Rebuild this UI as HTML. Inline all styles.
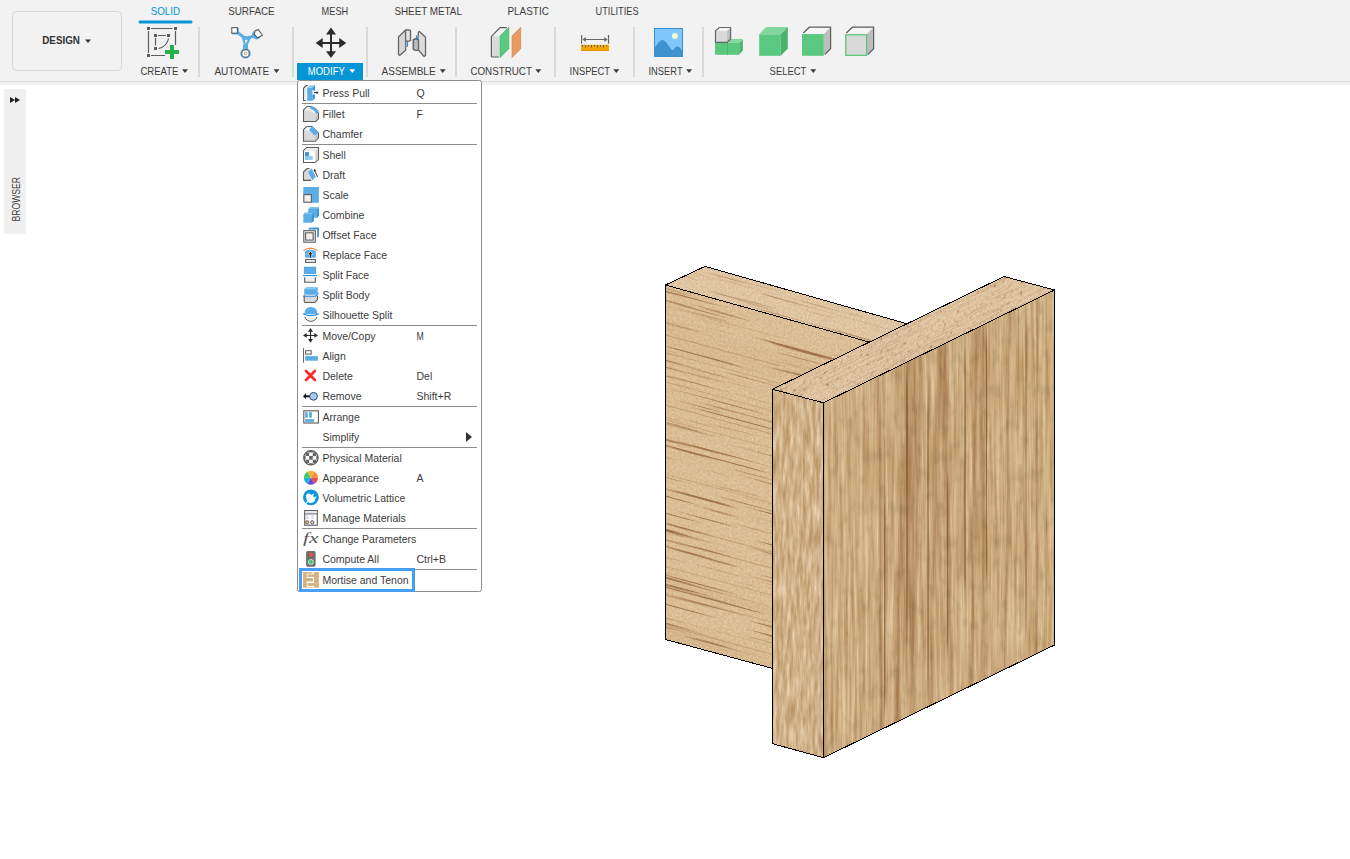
<!DOCTYPE html>
<html><head><meta charset="utf-8">
<style>
html,body{margin:0;padding:0;background:#fff;width:1350px;height:859px;overflow:hidden}
svg{display:block}
text{font-family:"Liberation Sans",sans-serif}
.tb{font-size:10.5px;fill:#3c3c3c}
.tab{font-size:11px;fill:#3c3c3c}
.mi{font-size:10.5px;fill:#3c3c3c}
</style></head>
<body>
<svg width="1350" height="859" viewBox="0 0 1350 859">
<!-- toolbar -->
<rect x="0" y="0" width="1350" height="85" fill="#f2f2f2"/>
<rect x="0" y="81" width="1350" height="1" fill="#dcdcdc"/>
<rect x="12.5" y="11.5" width="109" height="59" rx="4" fill="#f2f2f2" stroke="#d6d6d6"/>
<text x="42.2" y="44" font-size="11" font-weight="bold" fill="#333" textLength="37.8" lengthAdjust="spacingAndGlyphs">DESIGN</text>
<path d="M85 39.5h6l-3 3.5z" fill="#333"/>
<!-- tabs -->
<g class="tab">
<text x="150.7" y="15" fill="#0696d7" textLength="29.3" lengthAdjust="spacingAndGlyphs">SOLID</text>
<text x="228.2" y="15" textLength="46.5" lengthAdjust="spacingAndGlyphs">SURFACE</text>
<text x="321.6" y="15" textLength="26.6" lengthAdjust="spacingAndGlyphs">MESH</text>
<text x="394.4" y="15" textLength="67.5" lengthAdjust="spacingAndGlyphs">SHEET METAL</text>
<text x="507.4" y="15" textLength="41.5" lengthAdjust="spacingAndGlyphs">PLASTIC</text>
<text x="595.6" y="15" textLength="43" lengthAdjust="spacingAndGlyphs">UTILITIES</text>
</g>
<rect x="138.5" y="20.5" width="54" height="3" rx="1.5" fill="#0696d7"/>
<!-- separators -->
<g fill="#d9d9d9">
<rect x="198" y="27" width="2" height="50"/>
<rect x="292" y="27" width="2" height="50"/>
<rect x="366" y="27" width="2" height="50"/>
<rect x="455" y="27" width="2" height="50"/>
<rect x="554" y="27" width="2" height="50"/>
<rect x="633" y="27" width="2" height="50"/>
<rect x="702" y="27" width="2" height="50"/>
</g>
<!-- modify bg -->
<rect x="297" y="63" width="66" height="17" fill="#0696d7"/>
<!-- labels -->
<g class="tb">
<text x="140.4" y="75" textLength="38.1" lengthAdjust="spacingAndGlyphs">CREATE</text>
<text x="214.4" y="75" textLength="54.9" lengthAdjust="spacingAndGlyphs">AUTOMATE</text>
<text x="307.8" y="75" fill="#fff" textLength="37" lengthAdjust="spacingAndGlyphs">MODIFY</text>
<text x="381.5" y="75" textLength="54.1" lengthAdjust="spacingAndGlyphs">ASSEMBLE</text>
<text x="470.4" y="75" textLength="61.5" lengthAdjust="spacingAndGlyphs">CONSTRUCT</text>
<text x="569.6" y="75" textLength="40.4" lengthAdjust="spacingAndGlyphs">INSPECT</text>
<text x="648.5" y="75" textLength="34.1" lengthAdjust="spacingAndGlyphs">INSERT</text>
<text x="769.6" y="75" textLength="36.8" lengthAdjust="spacingAndGlyphs">SELECT</text>
</g>
<g fill="#3c3c3c">
<path d="M182 69.3h6l-3 3.6z"/>
<path d="M273.5 69.3h6l-3 3.6z"/>
<path d="M349.3 69.3h6l-3 3.6z" fill="#fff"/>
<path d="M439.7 69.3h6l-3 3.6z"/>
<path d="M535.3 69.3h6l-3 3.6z"/>
<path d="M613.3 69.3h6l-3 3.6z"/>
<path d="M686.1 69.3h6l-3 3.6z"/>
<path d="M810.3 69.3h6l-3 3.6z"/>
</g>
<!-- ICONS placeholder -->
<g id="icons">
<!-- create -->
<g fill="#5c5c5c">
<rect x="147" y="27" width="3" height="3"/><rect x="174" y="27" width="3" height="3"/><rect x="147" y="54" width="3" height="3"/>
<rect x="154" y="34" width="3" height="3"/><rect x="167" y="34" width="3" height="3"/><rect x="154" y="47" width="3" height="3"/>
</g>
<g stroke="#5c5c5c" stroke-width="1.2" fill="none">
<path d="M151 28.5h21.5M148.5 31v22M175.5 31v14M151 55.5h14M158 35.5h8M155.5 38v7.5M168.5 38.5Q167 46.5 158.5 48.5"/>
</g>
<path d="M170 45h4v5h5v4h-5v5h-4v-5h-5v-4h5z" fill="#24b04b"/>
<!-- automate -->
<g fill="#5aaee8">
<rect x="232.5" y="28.3" width="6.4" height="6.2"/>
<circle cx="256.6" cy="34.8" r="4.6"/>
<circle cx="245.5" cy="53.4" r="5.2"/>
<rect x="243" y="45" width="5" height="6"/>
</g>
<g fill="none" stroke="#5aaee8" stroke-linejoin="round">
<path d="M236.5 31.8Q241 35 243.8 37.3Q248 38.5 254 35.8" stroke-width="3"/>
<path d="M243.2 38.4L249.3 38.9L245.6 47.3Z" stroke-width="2.2"/>
</g>
<circle cx="245.5" cy="53.4" r="3.8" fill="#fff" stroke="#666" stroke-width="1.2"/>
<circle cx="245.5" cy="53.4" r="1.4" fill="none" stroke="#888" stroke-width="0.7"/>
<rect x="231.8" y="27.6" width="5.6" height="5.6" fill="#fff" stroke="#5c5c5c" stroke-width="1.1"/>
<path d="M258.3 29.5L262.4 35.3L257.6 37.8L254.3 34.5L255 30.9Z" fill="#fff" stroke="#5c5c5c" stroke-width="1.1"/>
<!-- move -->
<g fill="#2b2b2b">
<path d="M331 27.6L336 34.6H326zM331 58.1L336 51.3H326zM315.6 43L322.7 38V48zM346.3 43L339.2 38V48z"/>
<rect x="330" y="34" width="2" height="18"/><rect x="322" y="42" width="18" height="2"/>
</g>
<!-- assemble -->
<g stroke="#666" stroke-width="1.3" stroke-linejoin="round">
<path d="M398.5 37L405.5 30L410.5 30.5V40.5L405.7 41.3V50.2L399.7 55.5L398.5 54.6Z" fill="#d6d6d6"/>
<path d="M405.5 30.3Q408 29.5 410.4 30.5V40.5Q408 41.5 405.7 41.1Z" fill="#e4e4e4"/>
<path d="M419.5 31.5L425.5 37.2V55.5L424.1 56.5L418.8 50.4L414.4 49.9L413.4 49V39.5L418 38.1L418.5 32Z" fill="#dcdcdc"/>
<path d="M413.4 39.5Q416 38.5 418.5 39.6V50.2Q416 50.8 413.4 49.4Z" fill="#bdbdbd"/>
</g>
<path d="M407.4 42v4.8M416.4 35.2v5" stroke="#1e8be6" stroke-width="1.1"/>
<!-- construct -->
<rect x="492.2" y="36.2" width="6.8" height="20.8" fill="#d9d9d9"/>
<path d="M491.4 57V36.4L500 27.6H506.7M491.4 57H498.8" fill="none" stroke="#5c5c5c" stroke-width="1.2"/>
<path d="M500 36L508.8 27.3V48.8L500 57.5Z" fill="#5bc87f" stroke="#48b96c" stroke-width="0.8"/>
<path d="M512.1 36L520.7 27.3V48.8L512.1 57.5Z" fill="#e89b63" stroke="#da8a4f" stroke-width="0.8"/>
<!-- inspect -->
<rect x="581" y="44.8" width="28" height="6" fill="#f7a800"/>
<rect x="581" y="49.9" width="28" height="1" fill="#e39400"/>
<g fill="#666">
<rect x="581" y="35" width="1.2" height="8.7"/><rect x="607.9" y="35" width="1.2" height="8.7"/>
<rect x="583" y="39" width="24" height="1"/>
<path d="M582.5 39.5L585.8 37.1V41.9zM607.6 39.5L604.3 37.1V41.9z"/>
<rect x="582" y="45" width="1" height="1.7"/><rect x="585" y="45" width="1" height="2.8"/><rect x="588" y="45" width="1" height="1.7"/>
<rect x="591" y="45" width="1" height="2.8"/><rect x="594" y="45" width="1" height="1.7"/><rect x="597" y="45" width="1" height="2.8"/>
<rect x="600" y="45" width="1" height="1.7"/><rect x="603" y="45" width="1" height="2.8"/><rect x="606" y="45" width="1" height="1.7"/>
</g>
<!-- insert -->
<rect x="654.5" y="28.5" width="28" height="28" fill="#80c8fc" stroke="#3a8fd0"/>
<path d="M655 47.5Q659 40 662.4 39.9Q665 40 669 46Q671.5 50.5 673 50.2Q675 46.5 677.3 46.2Q680 46.5 682 50.9V56H655Z" fill="#3f93cd"/>
<circle cx="674.9" cy="36" r="3" fill="#fdfcc8" stroke="#a6d6f0" stroke-width="0.4"/>
<!-- select 1 -->
<path d="M715 42.5h24.3v12.3H715z" fill="#5bc87f"/>
<path d="M727.2 42.5L730.7 39H742.8L739.3 42.8z" fill="#80d89e"/>
<path d="M739.3 42.8L742.8 39.2V50.4L739.3 54.6z" fill="#49b36a"/>
<rect x="727.2" y="42.5" width="0.6" height="12.3" fill="#4aa969"/>
<path d="M715.5 31.1L719.3 27.5H730.6V39L727.2 42.4H715.5z" fill="#d9d9d9"/>
<path d="M715.5 31.1L719.3 27.5H730.6L727.2 31.1z" fill="#f4f4f4"/>
<path d="M727.2 31.1L730.6 27.5V39L727.2 42.4z" fill="#bdbdbd"/>
<path d="M715.5 42.4V31.1L719.3 27.5H730.6V39L727.2 42.4z" fill="none" stroke="#666" stroke-width="1.2"/>
<!-- select 2 -->
<path d="M759.2 34.3h21.6v21.5h-21.6z" fill="#5bc87f"/>
<path d="M759.2 34.3L766.2 27.1H787.8L780.8 34.3z" fill="#80d89e"/>
<path d="M780.8 34.3L787.8 27.1V48.5L780.8 55.8z" fill="#49b36a"/>
<!-- select 3 -->
<path d="M803.3 33L809.3 27.2H830.6L824.5 33z" fill="#f6f6f6"/>
<path d="M824 34L830.6 27.2V48.7L824 55z" fill="#bdbdbd"/>
<path d="M803.3 33L809.3 27.2H830.6V48.7L825 54.3" fill="none" stroke="#5c5c5c" stroke-width="1.2"/>
<rect x="802" y="34.1" width="21.8" height="21.7" fill="#5bc87f"/>
<!-- select 4 -->
<path d="M846.3 33L852.3 27.2H873.6L867.5 33z" fill="#f6f6f6"/>
<path d="M867 34L873.6 27.2V48.7L867 55z" fill="#bdbdbd"/>
<path d="M846.3 33L852.3 27.2H873.6V48.7L868 54.3" fill="none" stroke="#5c5c5c" stroke-width="1.2"/>
<rect x="845.8" y="34.8" width="20.8" height="20.5" fill="#d9d9d9" stroke="#5bc87f" stroke-width="1.3"/>
</g>

<!-- browser -->
<rect x="4" y="89" width="22" height="145" fill="#f0f0f0"/>
<path d="M10 97v6l5-3zM15 97v6l5-3z" fill="#222"/>
<text transform="translate(19.5,221.5) rotate(-90)" font-size="10" fill="#3c3c3c" textLength="44.6" lengthAdjust="spacingAndGlyphs">BROWSER</text>

<!-- WOOD placeholder -->
<g id="wood">
<defs>
<clipPath id="cA"><polygon points="705,266.4 907,323.8 869,342 665.5,285"/></clipPath>
<clipPath id="cB"><polygon points="665.5,285 869,342 772.5,389.3 772.5,668.4 665.5,639.5"/></clipPath>
<clipPath id="cC"><polygon points="1004,276.5 1054.5,290 823.5,402.8 772.5,389.3"/></clipPath>
<clipPath id="cD"><polygon points="772.5,389.3 823.5,402.8 823.5,757.7 772.5,743.7"/></clipPath>
<clipPath id="cE"><polygon points="823.5,402.8 1054.5,290 1054.5,645 823.5,757.7"/></clipPath>
<filter id="fE" x="0" y="0" width="1" height="1" color-interpolation-filters="sRGB">
  <feTurbulence type="fractalNoise" baseFrequency="0.35 0.012" numOctaves="3" seed="7"/>
  <feColorMatrix type="matrix" values="0.26 0 0 0 0.6740  0.32 0 0 0 0.5186  0.38 0 0 0 0.3134  0 0 0 0 1" result="base"/>
  <feTurbulence type="fractalNoise" baseFrequency="0.04 0.001" numOctaves="1" seed="3"/>
  <feColorMatrix type="matrix" values="1.0 0 0 0 0.0  1.0 0 0 0 0.0  1.0 0 0 0 0.0  0 0 0 0 1"/><feComponentTransfer><feFuncR type="table" tableValues="1 1 1 1 1 1 1 1 1 1 1 1 0.88 1 1 1 1 1 1 1 1 1 1 1 1"/><feFuncG type="table" tableValues="1 1 1 1 1 1 1 1 1 1 1 1 0.82 1 1 1 1 1 1 1 1 1 1 1 1"/><feFuncB type="table" tableValues="1 1 1 1 1 1 1 1 1 1 1 1 0.76 1 1 1 1 1 1 1 1 1 1 1 1"/><feFuncA type="linear" slope="0" intercept="1"/></feComponentTransfer>
  <feBlend mode="multiply" in="base" result="b2"/>
  <feTurbulence type="fractalNoise" baseFrequency="0.12 0.06" numOctaves="2" seed="17"/>
  <feColorMatrix type="matrix" values="0.25 0 0 0 0.875  0.28 0 0 0 0.86  0.3 0 0 0 0.85  0 0 0 0 1"/>
  <feBlend mode="multiply" in="b2"/>
</filter>
<filter id="fD" x="0" y="0" width="1" height="1" color-interpolation-filters="sRGB">
  <feTurbulence type="fractalNoise" baseFrequency="0.3 0.04" numOctaves="3" seed="11"/>
  <feColorMatrix type="matrix" values="0.3 0 0 0 0.6656  0.38 0 0 0 0.5039  0.46 0 0 0 0.3031  0 0 0 0 1" result="base"/>
  <feTurbulence type="fractalNoise" baseFrequency="0.45 0.07" numOctaves="1" seed="19"/>
  <feColorMatrix type="matrix" values="1.0 0 0 0 0.0  1.0 0 0 0 0.0  1.0 0 0 0 0.0  0 0 0 0 1"/><feComponentTransfer><feFuncR type="table" tableValues="0.72 0.78 0.86 0.94 1 1 1 1 1 1 1 1 1 1 1 1"/><feFuncG type="table" tableValues="0.62 0.7 0.8 0.92 1 1 1 1 1 1 1 1 1 1 1 1"/><feFuncB type="table" tableValues="0.52 0.6 0.74 0.9 1 1 1 1 1 1 1 1 1 1 1 1"/><feFuncA type="linear" slope="0" intercept="1"/></feComponentTransfer>
  <feBlend mode="multiply" in="base"/>
</filter>
<filter id="fB" x="0" y="0" width="1" height="1" color-interpolation-filters="sRGB">
  <feTurbulence type="fractalNoise" baseFrequency="0.5 0.5" numOctaves="2" seed="5"/>
  <feColorMatrix type="matrix" values="0.15 0 0 0 0.7847  0.2 0 0 0 0.6441  0.26 0 0 0 0.4545  0 0 0 0 1" result="base"/>
  <feTurbulence type="fractalNoise" baseFrequency="0.008 0.45" numOctaves="2" seed="9"/>
  <feColorMatrix type="matrix" values="2.0 0 0 0 -0.5  2.0 0 0 0 -0.5  2.0 0 0 0 -0.5  0 0 0 0 1"/><feComponentTransfer><feFuncR type="table" tableValues="0.72 0.8 0.88 0.95 1 1 1 1 1 1 1 1 1 1 1 1"/><feFuncG type="table" tableValues="0.6 0.7 0.82 0.93 1 1 1 1 1 1 1 1 1 1 1 1"/><feFuncB type="table" tableValues="0.5 0.62 0.76 0.9 1 1 1 1 1 1 1 1 1 1 1 1"/><feFuncA type="linear" slope="0" intercept="1"/></feComponentTransfer>
  <feBlend mode="multiply" in="base" result="b2"/>
  <feTurbulence type="fractalNoise" baseFrequency="0.002 0.03" numOctaves="2" seed="21"/>
  <feColorMatrix type="matrix" values="0.1 0 0 0 0.95  0.16 0 0 0 0.92  0.22 0 0 0 0.89  0 0 0 0 1"/>
  <feBlend mode="multiply" in="b2"/>
</filter>
<filter id="fA" x="0" y="0" width="1" height="1" color-interpolation-filters="sRGB">
  <feTurbulence type="fractalNoise" baseFrequency="0.6 0.6" numOctaves="2" seed="2"/>
  <feColorMatrix type="matrix" values="0.2 0 0 0 0.7731  0.22 0 0 0 0.6645  0.25 0 0 0 0.5099  0 0 0 0 1" result="base"/>
  <feTurbulence type="fractalNoise" baseFrequency="0.01 0.5" numOctaves="2" seed="4"/>
  <feColorMatrix type="matrix" values="1.8 0 0 0 -0.4  1.8 0 0 0 -0.4  1.8 0 0 0 -0.4  0 0 0 0 1"/><feComponentTransfer><feFuncR type="table" tableValues="0.8 0.86 0.92 0.97 1 1 1 1 1 1 1 1 1 1 1 1"/><feFuncG type="table" tableValues="0.7 0.8 0.88 0.95 1 1 1 1 1 1 1 1 1 1 1 1"/><feFuncB type="table" tableValues="0.6 0.72 0.84 0.93 1 1 1 1 1 1 1 1 1 1 1 1"/><feFuncA type="linear" slope="0" intercept="1"/></feComponentTransfer>
  <feBlend mode="multiply" in="base"/>
</filter>
<filter id="fC" x="0" y="0" width="1" height="1" color-interpolation-filters="sRGB">
  <feTurbulence type="fractalNoise" baseFrequency="0.6 0.6" numOctaves="2" seed="12"/>
  <feColorMatrix type="matrix" values="0.2 0 0 0 0.7747  0.22 0 0 0 0.6612  0.25 0 0 0 0.5109  0 0 0 0 1" result="base"/>
  <feTurbulence type="fractalNoise" baseFrequency="0.3 0.3" numOctaves="1" seed="14"/>
  <feColorMatrix type="matrix" values="1.0 0 0 0 0.0  1.0 0 0 0 0.0  1.0 0 0 0 0.0  0 0 0 0 1"/><feComponentTransfer><feFuncR type="table" tableValues="0.7 0.7 0.72 0.78 0.88 0.96 1 1 1 1 1 1 1 1 1 1"/><feFuncG type="table" tableValues="0.58 0.58 0.6 0.68 0.82 0.94 1 1 1 1 1 1 1 1 1 1"/><feFuncB type="table" tableValues="0.48 0.48 0.5 0.6 0.76 0.92 1 1 1 1 1 1 1 1 1 1"/><feFuncA type="linear" slope="0" intercept="1"/></feComponentTransfer>
  <feBlend mode="multiply" in="base" result="b2"/>
  <feTurbulence type="fractalNoise" baseFrequency="0.01 0.35" numOctaves="1" seed="31"/>
  <feColorMatrix type="matrix" values="1.0 0 0 0 0.0  1.0 0 0 0 0.0  1.0 0 0 0 0.0  0 0 0 0 1"/><feComponentTransfer><feFuncR type="table" tableValues="1 1 1 1 1 1 1 1 1 1 0.92 1 1 1 1 1 1 1 1 1 1"/><feFuncG type="table" tableValues="1 1 1 1 1 1 1 1 1 1 0.88 1 1 1 1 1 1 1 1 1 1"/><feFuncB type="table" tableValues="1 1 1 1 1 1 1 1 1 1 0.84 1 1 1 1 1 1 1 1 1 1"/><feFuncA type="linear" slope="0" intercept="1"/></feComponentTransfer>
  <feBlend mode="multiply" in="b2"/>
</filter>
<linearGradient id="fadeV" x1="0" y1="0" x2="0" y2="1"><stop offset="0" stop-color="#6e4420" stop-opacity="0"/><stop offset="0.12" stop-color="#6e4420"/><stop offset="0.88" stop-color="#6e4420"/><stop offset="1" stop-color="#6e4420" stop-opacity="0"/></linearGradient>
<filter id="blur1"><feGaussianBlur stdDeviation="0.45"/></filter><filter id="blur05"><feGaussianBlur stdDeviation="0.35"/></filter>
</defs>
<g clip-path="url(#cE)"><rect x="815" y="280" width="250" height="490" filter="url(#fE)"/>
<g><rect x="884.25" y="430" width="1.1" height="100" fill="url(#fadeV)" opacity="0.44999999999999996"/><rect x="884.25" y="500" width="1.1" height="220" fill="url(#fadeV)" opacity="0.8250000000000001"/><rect x="906.45" y="355" width="1.1" height="295" fill="url(#fadeV)" opacity="0.8999999999999999"/><rect x="927.45" y="380" width="1.1" height="330" fill="url(#fadeV)" opacity="0.75"/><rect x="947.1500000000001" y="470" width="1.1" height="190" fill="url(#fadeV)" opacity="0.6000000000000001"/><rect x="964.45" y="330" width="1.1" height="280" fill="url(#fadeV)" opacity="0.8250000000000001"/><rect x="985.95" y="320" width="1.1" height="270" fill="url(#fadeV)" opacity="0.6000000000000001"/><rect x="1025.45" y="300" width="1.1" height="350" fill="url(#fadeV)" opacity="0.5249999999999999"/></g></g>
<g clip-path="url(#cD)"><rect x="765" y="380" width="65" height="385" filter="url(#fD)"/></g>
<g clip-path="url(#cB)"><g transform="matrix(1,0.27,0,1,0,0)"><rect x="650" y="0" width="240" height="520" filter="url(#fB)"/></g>
<g fill="none" stroke="#95612c" filter="url(#blur05)"><path d="M660 305 L780 337.4" stroke-opacity="0.144" stroke-width="1"/><path d="M660 333.5 L780 365.9" stroke-opacity="0.36" stroke-width="1"/><path d="M660 351 L780 383.4" stroke-opacity="0.252" stroke-width="1"/><path d="M660 380.6 L780 413.0" stroke-opacity="0.252" stroke-width="1"/><path d="M660 403.7 L780 436.1" stroke-opacity="0.36" stroke-width="1"/><path d="M660 418 L780 450.4" stroke-opacity="0.252" stroke-width="1"/><path d="M660 437 L780 469.4" stroke-opacity="0.144" stroke-width="1"/><path d="M660 472.8 L780 505.2" stroke-opacity="0.252" stroke-width="1"/><path d="M660 522 L780 554.4" stroke-opacity="0.36" stroke-width="1"/><path d="M660 538 L780 570.4" stroke-opacity="0.36" stroke-width="1"/><path d="M660 565 L780 597.4" stroke-opacity="0.252" stroke-width="1"/><path d="M660 592 L780 624.4" stroke-opacity="0.252" stroke-width="1"/><path d="M660 616 L780 648.4" stroke-opacity="0.144" stroke-width="1"/><path d="M660 624 L780 656.4" stroke-opacity="0.324" stroke-width="1"/></g></g>
<g clip-path="url(#cA)"><g transform="matrix(1,0.28,0,1,0,0)"><rect x="650" y="60" width="270" height="100" filter="url(#fA)"/></g></g>
<g clip-path="url(#cC)"><g transform="matrix(1,-0.4875,0,1,0,0)"><rect x="760" y="760" width="300" height="100" filter="url(#fC)"/></g></g>
<g fill="none" stroke="#000" stroke-width="1" shape-rendering="crispEdges">
<polyline points="665.5,639.5 665.5,285 705,266.4 907,323.8"/>
<line x1="665.5" y1="285" x2="869" y2="342"/>
<polyline points="772.5,668.4 665.5,639.5"/>
<polygon points="1004,276.5 1054.5,290 1054.5,645 823.5,757.7 772.5,743.7 772.5,389.3"/>
<polyline points="772.5,389.3 823.5,402.8 1054.5,290"/>
<line x1="823.5" y1="402.8" x2="823.5" y2="757.7"/>
</g>
</g>

<!-- MENU -->
<rect x="297.5" y="80.5" width="184" height="511" rx="2" fill="#fff" stroke="#8c8c8c"/>
<g fill="#8c8c8c">
<rect x="302" y="103" width="175" height="1"/>
<rect x="302" y="144" width="175" height="1"/>
<rect x="302" y="325" width="175" height="1"/>
<rect x="302" y="406" width="175" height="1"/>
<rect x="302" y="447" width="175" height="1"/>
<rect x="302" y="528" width="175" height="1"/>
<rect x="302" y="569" width="175" height="1"/>
</g>
<g class="mi">
<text x="322.4" y="97">Press Pull</text><text x="416.5" y="97">Q</text>
<text x="322.4" y="118">Fillet</text><text x="416.5" y="118">F</text>
<text x="322.4" y="138">Chamfer</text>
<text x="322.4" y="159">Shell</text>
<text x="322.4" y="179">Draft</text>
<text x="322.4" y="199">Scale</text>
<text x="322.4" y="219">Combine</text>
<text x="322.4" y="239">Offset Face</text>
<text x="322.4" y="259">Replace Face</text>
<text x="322.4" y="279">Split Face</text>
<text x="322.4" y="299">Split Body</text>
<text x="322.4" y="319">Silhouette Split</text>
<text x="322.4" y="340">Move/Copy</text><text x="416.5" y="340" textLength="7.2" lengthAdjust="spacingAndGlyphs">M</text>
<text x="322.4" y="360">Align</text>
<text x="322.4" y="380">Delete</text><text x="416.5" y="380">Del</text>
<text x="322.4" y="400">Remove</text><text x="416.5" y="400">Shift+R</text>
<text x="322.4" y="421">Arrange</text>
<text x="322.4" y="441">Simplify</text>
<text x="322.4" y="462">Physical Material</text>
<text x="322.4" y="482">Appearance</text><text x="416.5" y="482">A</text>
<text x="322.4" y="502">Volumetric Lattice</text>
<text x="322.4" y="522">Manage Materials</text>
<text x="322.4" y="543">Change Parameters</text>
<text x="322.4" y="563">Compute All</text><text x="416.5" y="563">Ctrl+B</text>
<text x="322.4" y="584">Mortise and Tenon</text>
</g>
<path d="M466 432v10l6-5z" fill="#333"/>
<rect x="300.5" y="569.5" width="113" height="21" fill="none" stroke="#45a0f5" stroke-width="3"/>
<g id="micons">
<g transform="translate(303,85)"><path d="M2.8 15.5H0.5V3.3L3.2 0.5H4.8" fill="#ececec" stroke="#5a5a5a" stroke-width="1.1"/>
<path d="M4.2 2.8L6.6 0.3H12L9.4 2.8z" fill="#8ccdf7"/>
<rect x="4.2" y="2.8" width="5.2" height="13" fill="#5aaee8"/>
<path d="M9.4 2.8L12 0.3V5.6H9.4V9.4H12V13.2L9.4 15.8z" fill="#3b92d4"/>
<path d="M11 7.6H14.5" stroke="#222" stroke-width="1"/><path d="M15.4 7.6L13.6 6V9.2z" fill="#222"/></g>
<g transform="translate(303,106)"><path d="M0.5 15.5V4L4 0.5H7.3Q13.5 1.5 15.5 7V12.8L12.6 15.5z" fill="#d9d9d9" stroke="#5a5a5a" stroke-width="1.1"/>
<path d="M1.2 4.3L4.2 1.3H7.2Q11 2 13 5L11 7Q8 4.5 5 4.5z" fill="#f7f7f7"/>
<path d="M7.4 1.6Q12.6 2.6 14.7 7.4" fill="none" stroke="#5aaee8" stroke-width="2.6"/>
<path d="M12.8 14.8L15 12.6V9L12.8 10.5z" fill="#bdbdbd"/></g>
<g transform="translate(303,126)"><path d="M0.5 15.3V3.8L3.8 0.5H8.8L15.5 7V11.8L12.3 15.3z" fill="#d9d9d9" stroke="#5a5a5a" stroke-width="1.1"/>
<path d="M1.2 4L4 1.2H7L11.5 7.5Q6 4.5 1.2 4z" fill="#f5f5f5"/>
<path d="M9.1 0.5L15.6 6.6L12 9.8L5.9 3.9z" fill="#5aaee8"/>
<path d="M12.3 14.6L15 11.8V8L12.3 10.5z" fill="#c2c2c2"/></g>
<g transform="translate(303,147)"><path d="M0.5 15.5V3.6L3.6 0.5H15.5V12.3L12.3 15.5z" fill="#fff" stroke="#5a5a5a" stroke-width="1.1"/>
<path d="M1.2 3.6L3.8 1.2H14.8L12.3 3.6z" fill="#ececec"/><path d="M12.3 3.6L14.8 1.2V12L12.3 14.8z" fill="#d0d0d0"/>
<path d="M0.5 3.6H12.3V15.5" fill="none" stroke="#ddd" stroke-width="0.6"/>
<rect x="2.1" y="5.1" width="3.8" height="7.7" fill="#3b92d4"/><rect x="2.1" y="9.1" width="7.7" height="3.7" fill="#8ccdf7"/></g>
<g transform="translate(303,167)"><path d="M8.2 13.4H0.5V5L4 1.5H6.5" fill="#d9d9d9" stroke="#5a5a5a" stroke-width="1.1"/>
<path d="M8.6 1.3L12.8 9.6L9.3 13.6L5.2 5z" fill="#5aaee8"/>
<path d="M14.5 9.9L11.8 3.6" stroke="#222" stroke-width="0.9"/><path d="M11.1 1.8L13.2 3.6L10.8 4.5z" fill="#222"/></g>
<g transform="translate(303,187)"><path d="M0.3 0.1H15.9V15.7H8.9V7.1H0.3z" fill="#5aaee8"/>
<rect x="0.8" y="7.6" width="7.6" height="7.6" fill="#f0f0f0" stroke="#5a5a5a" stroke-width="1.1"/></g>
<g transform="translate(303,207)"><path d="M5.2 2L7 0.2H15.9V8.8L14 10.8H5.2z" fill="#5aaee8"/><path d="M14 2H15.9V8.8L14 10.8z" fill="#3b92d4"/>
<path d="M0.3 7.3L2 5.5H10.7V13.8L8.8 15.7H0.3z" fill="#5aaee8"/><path d="M8.8 7.3H10.7V13.8L8.8 15.7z" fill="#3b92d4"/>
<path d="M1.5 6.6H9" stroke="#8ccdf7" stroke-width="0.8"/><path d="M6.5 1.2H15" stroke="#8ccdf7" stroke-width="0.8"/></g>
<g transform="translate(303,227)"><path d="M5.6 0.8L15.9 0.4V9.7L14.2 10.6V2.5H5.6z" fill="#3b92d4"/>
<rect x="0.8" y="3.7" width="11.5" height="11.5" fill="#fff" stroke="#5a5a5a" stroke-width="1.1"/>
<rect x="2.6" y="5.8" width="7.6" height="7.3" fill="#f0f0f0" stroke="#5a5a5a" stroke-width="1.1"/></g>
<g transform="translate(303,247)"><path d="M0.5 3.6Q7.5 -1.5 14.7 3.6" fill="none" stroke="#f08a3c" stroke-width="1.2"/>
<path d="M2.1 4Q7.5 1 12.8 4V10.8H2.1z" fill="#5aaee8"/>
<path d="M7.4 3.5L10.5 8H8.3V10.8H6.5V8H4.3z" fill="#fff"/><path d="M7.4 4.5L9.6 7.6H8V10.8H6.8V7.6H5.2z" fill="#222"/>
<rect x="2.6" y="12.6" width="9.8" height="2.8" fill="#fff" stroke="#5a5a5a" stroke-width="1.1"/></g>
<g transform="translate(303,267)"><rect x="1.2" y="0.1" width="11.6" height="6.6" fill="#5aaee8" stroke="#3b92d4" stroke-width="0.6"/>
<rect x="0" y="8" width="14" height="1.1" fill="#1e8be6"/>
<path d="M1.7 10.2V15.2H12.3V10.2" fill="#f0f0f0" stroke="#5a5a5a" stroke-width="1.1"/></g>
<g transform="translate(303,287)"><path d="M1.2 2.2L3.3 0.2H14.7V5.5L12.6 7.8H1.2z" fill="#5aaee8"/><path d="M1.5 2.2L3.3 0.6H14L12.3 2.2z" fill="#8ccdf7"/>
<path d="M1.2 8.3V14.8L2 15.5H11.7L14.5 12.6V8.8" fill="#d9d9d9" stroke="#5a5a5a" stroke-width="1.1"/>
<path d="M0 9.2H12.4L15.6 5.8" fill="none" stroke="#1e8be6" stroke-width="1.1"/></g>
<g transform="translate(303,307)"><path d="M1.3 7.3Q1.5 0.2 7.9 0.1Q14.3 0.2 14.5 7.3z" fill="#5aaee8"/>
<path d="M0 6.7Q7.9 10.5 15.8 6.7" fill="none" stroke="#1e8be6" stroke-width="1.1"/>
<path d="M1.8 9.8Q3.5 14.3 7.9 14.3Q12.3 14.3 14 9.8" fill="#f6f6f6" stroke="#5a5a5a" stroke-width="1"/></g>
<g transform="translate(303,328)"><g fill="#2b2b2b"><path d="M7.5 0.1L10 3.8H5zM7.5 14.8L10 11H5zM0 7.4L3.7 5V9.8zM15 7.4L11.3 5V9.8z"/>
<rect x="7" y="3" width="1.1" height="9"/><rect x="3" y="6.9" width="9" height="1.1"/></g></g>
<g transform="translate(303,348)"><rect x="0" y="0.1" width="0.9" height="14.7" fill="#5a5a5a"/>
<rect x="2.6" y="2.7" width="5.6" height="3.4" fill="#fff" stroke="#5a5a5a" stroke-width="1"/>
<rect x="2.1" y="8.1" width="12.8" height="4.6" fill="#5aaee8"/></g>
<g transform="translate(303,368)"><path d="M3 3L11.9 12M11.9 3L3 12" stroke="#ff2626" stroke-width="2.6" stroke-linecap="round"/></g>
<g transform="translate(303,388)"><path d="M2 8.3H7" stroke="#111" stroke-width="2"/><path d="M0 8.3L3 5.3V11.3z" fill="#111"/>
<circle cx="10.5" cy="8.3" r="3.9" fill="#a9c8ea" stroke="#2a4f80" stroke-width="1"/></g>
<g transform="translate(303,409)"><rect x="0.8" y="1.8" width="14.6" height="12.2" fill="#fff" stroke="#5a5a5a" stroke-width="1.1"/>
<rect x="2.1" y="3.1" width="2.6" height="5.6" fill="#5aaee8"/><rect x="6.1" y="3.1" width="2.8" height="5.6" fill="#5aaee8"/>
<rect x="2.1" y="10.1" width="8.9" height="2.8" fill="#5aaee8"/></g>
<g transform="translate(303,450)"><defs><pattern id="chk" x="2.55" y="2.45" width="7.2" height="7.2" patternUnits="userSpaceOnUse"><rect x="0" y="0" width="3.6" height="3.6" fill="#555"/><rect x="3.6" y="3.6" width="3.6" height="3.6" fill="#555"/></pattern></defs>
<circle cx="7.9" cy="7.8" r="7.3" fill="#fff"/><circle cx="7.9" cy="7.8" r="7.3" fill="url(#chk)" opacity="0.9"/>
<circle cx="7.9" cy="7.8" r="7.2" fill="none" stroke="#555" stroke-width="1.1"/></g>
<g transform="translate(303,470)"><path d="M7.9 7.8L4.40 1.74A7.0 7.0 0 0 1 11.40 1.74z" fill="#fbb233"/><path d="M7.9 7.8L11.40 1.74A7.0 7.0 0 0 1 14.90 7.80z" fill="#f98a30"/><path d="M7.9 7.8L14.90 7.80A7.0 7.0 0 0 1 11.40 13.86z" fill="#e84e4a"/><path d="M7.9 7.8L11.40 13.86A7.0 7.0 0 0 1 4.40 13.86z" fill="#6a45e6"/><path d="M7.9 7.8L4.40 13.86A7.0 7.0 0 0 1 0.90 7.80z" fill="#19b4d2"/><path d="M7.9 7.8L0.90 7.80A7.0 7.0 0 0 1 4.40 1.74z" fill="#3ec86c"/></g>
<g transform="translate(303,490)"><circle cx="7.9" cy="7.3" r="7.9" fill="#0c96e0"/>
<path d="M3 5.5Q3.5 3.5 6 3.2L9 5.2L10 3.5L11 4.3L10 6L11.8 7.5L13 6.2L13.8 7L12.3 8.6Q12.5 11 10 12.5Q7 13.5 5 12L2.3 14.5L1.8 13.8L4.3 11.3Q3 9 3 5.5z" fill="#fff"/></g>
<g transform="translate(303,510)"><rect x="1.7" y="0.6" width="12.6" height="14.6" fill="#fff" stroke="#5a5a5a" stroke-width="1.1"/>
<rect x="2.2" y="1.1" width="11.6" height="2.6" fill="#e4e4f0"/><rect x="1.2" y="3.5" width="13.6" height="0.9" fill="#5a5a5a"/>
<path d="M3 6.1H5.5M8.2 6.1H10.7M3 8.1H5.5M8.2 8.1H10.7" stroke="#8c9ad0" stroke-width="0.6"/>
<circle cx="4.2" cy="12.3" r="1.6" fill="#f0c040" stroke="#555" stroke-width="0.9"/><circle cx="9.3" cy="12.3" r="1.6" fill="#ddd" stroke="#444" stroke-width="0.9"/></g>
<g transform="translate(303,531)"><text x="0" y="11.5" style="font-family:'Liberation Serif',serif;font-style:italic;font-size:15px" fill="#555" textLength="15.5" lengthAdjust="spacingAndGlyphs">fx</text></g>
<g transform="translate(303,551)"><rect x="3.1" y="0.1" width="9.5" height="15.6" rx="1.6" fill="#6e6e6e"/>
<circle cx="7.9" cy="3.9" r="2.1" fill="#f24a4a"/><circle cx="7.9" cy="10.9" r="2.7" fill="#fff"/><circle cx="7.9" cy="10.9" r="2.1" fill="#3ec86c"/></g>
<g transform="translate(303,572)"><g fill="#d5b585">
<path d="M0 0H9.8V1.5H3.8V6.1H9.8V9.6H3.8V14.9H9.8V15.8H0z"/>
<path d="M11 0H15.9V15.8H11V13.9H4.5V11.1H11V5H4.5V2.2H11z"/>
</g>
<g fill="#c29a62" opacity="0.6"><rect x="0" y="7.5" width="9.8" height="0.6"/><rect x="11" y="9" width="4.9" height="0.6"/><rect x="11" y="4" width="4.9" height="0.5"/><rect x="0" y="12" width="4" height="0.5"/></g></g>
</g>
</svg>
</body></html>
